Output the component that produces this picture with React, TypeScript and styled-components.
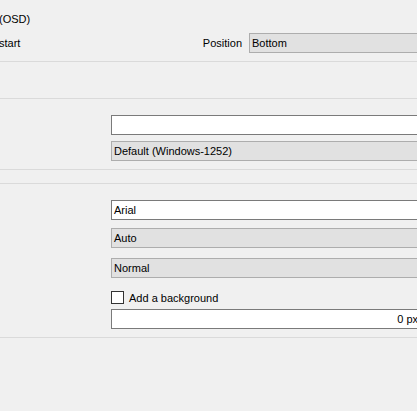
import React from "react";
import styled, { createGlobalStyle } from "styled-components";

const Global = createGlobalStyle`
  html, body {
    margin: 0;
    padding: 0;
    background: #f0f0f0;
    overflow: hidden;
  }
  body {
    font-family: "Liberation Sans", Arial, sans-serif;
    font-size: 11px;
    color: #000;
  }
`;

const Page = styled.div`
  width: 421px;
  display: flex;
  flex-direction: column;
`;

const Section = styled.div<{ $pt: number; $pb: number }>`
  display: flex;
  flex-direction: column;
  padding: ${(p) => p.$pt}px 0 ${(p) => p.$pb}px 0;
  border-bottom: 1px solid #dadada;
`;

const Spacer = styled.div<{ $h: number }>`
  height: ${(p) => p.$h}px;
  border-bottom: 1px solid #dadada;
`;

const Title = styled.div`
  height: 14px;
  line-height: 14px;
  margin-left: -1px;
  white-space: nowrap;
`;

const SplitRow = styled.div<{ $mt: number }>`
  margin-top: ${(p) => p.$mt}px;
  display: flex;
  align-items: center;
  height: 20px;
`;

const LeftLabel = styled.span`
  margin-left: -1px;
  flex: 1;
  white-space: nowrap;
`;

const InlineLabel = styled.span`
  margin-right: 7px;
  white-space: nowrap;
`;

const Field = styled.div<{ $mt?: number }>`
  margin-top: ${(p) => p.$mt ?? 0}px;
  margin-left: 111px;
  display: flex;
  align-items: center;
`;

const Combo = styled.div<{ $w?: number }>`
  box-sizing: border-box;
  height: 20px;
  width: ${(p) => (p.$w ? `${p.$w}px` : "100%")};
  background: #e1e1e1;
  border: 1px solid #adadad;
  padding: 0 2px;
  line-height: 18px;
  white-space: nowrap;
  overflow: hidden;
`;

const TextBox = styled.div<{ $right?: boolean }>`
  box-sizing: border-box;
  height: 20px;
  width: 100%;
  background: #ffffff;
  border: 1px solid #7a7a7a;
  padding: 0 2px;
  line-height: 18px;
  text-align: ${(p) => (p.$right ? "right" : "left")};
  white-space: nowrap;
  overflow: hidden;
`;

const CheckRow = styled.label`
  display: flex;
  align-items: center;
  gap: 5px;
  height: 13px;
  white-space: nowrap;
`;

const CheckBox = styled.span`
  box-sizing: border-box;
  width: 13px;
  height: 13px;
  border: 1px solid #333333;
  background: #ffffff;
  flex: none;
`;

export default function App() {
  return (
    <Page>
      <Global />
      <Section $pt={12} $pb={8}>
        <Title>(OSD)</Title>
        <SplitRow $mt={7}>
          <LeftLabel>start</LeftLabel>
          <InlineLabel>Position</InlineLabel>
          <Combo $w={172}>Bottom</Combo>
        </SplitRow>
      </Section>
      <Spacer $h={36} />
      <Section $pt={16} $pb={8}>
        <Field>
          <TextBox />
        </Field>
        <Field $mt={6}>
          <Combo>Default (Windows-1252)</Combo>
        </Field>
      </Section>
      <Spacer $h={13} />
      <Section $pt={16} $pb={8}>
        <Field>
          <TextBox>Arial</TextBox>
        </Field>
        <Field $mt={8}>
          <Combo>Auto</Combo>
        </Field>
        <Field $mt={10}>
          <Combo>Normal</Combo>
        </Field>
        <Field $mt={13}>
          <CheckRow>
            <CheckBox />
            Add a background
          </CheckRow>
        </Field>
        <Field $mt={5}>
          <TextBox $right>0 px</TextBox>
        </Field>
      </Section>
    </Page>
  );
}
